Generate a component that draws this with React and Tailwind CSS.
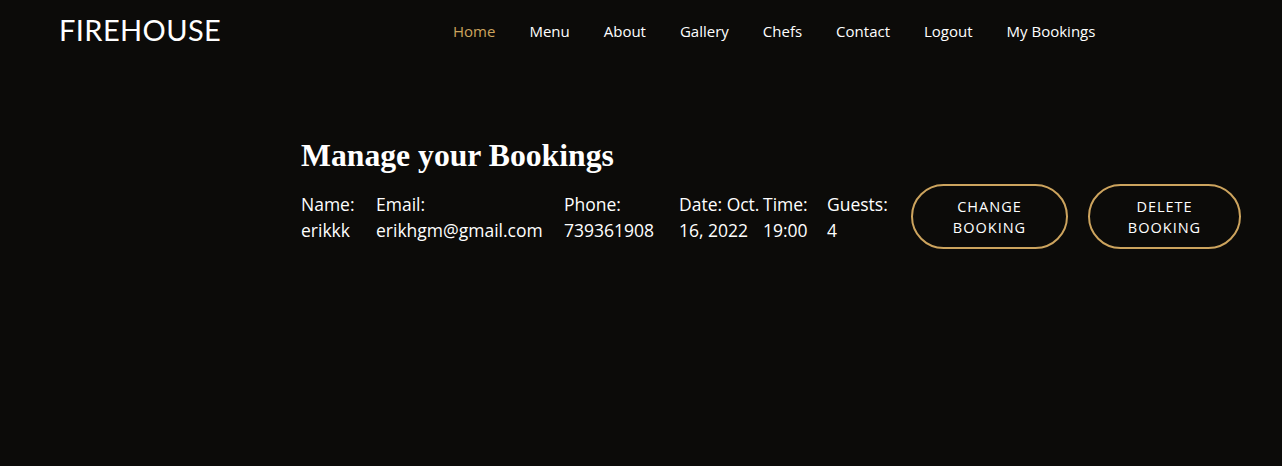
const NAV = ["Home", "Menu", "About", "Gallery", "Chefs", "Contact", "Logout", "My Bookings"];

const booking = {
    name: "erikkk",
    email: "erikhgm@gmail.com",
    phone: "739361908",
    time: "19:00",
    guests: "4",
};

const App = () => {
    return (
        <div className="min-h-[466px] bg-[#0c0b09] text-white font-['Open_Sans',sans-serif]">
            {/* Header */}
            <header className="h-[62px] flex items-center">
                <div className="pl-[59px] w-[453px] shrink-0">
                    <span className="text-[29px] leading-none tracking-[0.4px] font-['Lato',sans-serif] font-normal">
                        FIREHOUSE
                    </span>
                </div>
                <nav className="flex items-center gap-[34px] text-[15px] font-medium">
                    {NAV.map((item) => (
                        <a
                            key={item}
                            className={item === "Home" ? "text-[#cda45e]" : "text-white"}
                        >
                            {item}
                        </a>
                    ))}
                </nav>
            </header>

            {/* Bookings */}
            <section className="pl-[301px] pt-[74px]">
                <h2 className="text-[31.7px] leading-[40px] font-bold font-['Liberation_Serif',serif] mb-[8px]">
                    Manage your Bookings
                </h2>

                <div className="flex items-center text-[17.5px] leading-[26px]">
                    <div className="w-[75px]">
                        <div>Name:</div>
                        <div>{booking.name}</div>
                    </div>
                    <div className="w-[188px]">
                        <div>Email:</div>
                        <div>{booking.email}</div>
                    </div>
                    <div className="w-[115px]">
                        <div>Phone:</div>
                        <div>{booking.phone}</div>
                    </div>
                    <div className="w-[84px]">
                        <div className="whitespace-nowrap">Date: Oct.</div>
                        <div>16, 2022</div>
                    </div>
                    <div className="w-[64px]">
                        <div>Time:</div>
                        <div>{booking.time}</div>
                    </div>
                    <div className="w-[84px]">
                        <div>Guests:</div>
                        <div>{booking.guests}</div>
                    </div>
                    <div className="flex gap-[20px]">
                        <button className="w-[157px] h-[65px] rounded-full border-2 border-[#cda45e] text-[14.5px] leading-[21px] tracking-[1px] uppercase">
                            Change
                            <br />
                            Booking
                        </button>
                        <button className="w-[153px] h-[65px] rounded-full border-2 border-[#cda45e] text-[14.5px] leading-[21px] tracking-[1px] uppercase">
                            Delete
                            <br />
                            Booking
                        </button>
                    </div>
                </div>
            </section>
        </div>
    );
};

export default App;
